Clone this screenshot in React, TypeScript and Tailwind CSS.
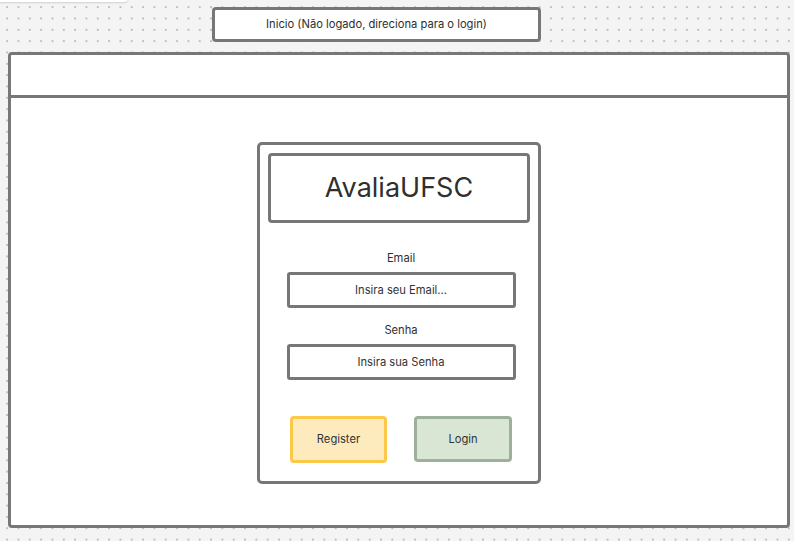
import React from 'react';

const Field = ({ label, placeholder, first }: { label: string; placeholder: string; first?: boolean }) => (
  <div className={`flex flex-col items-center pl-[4px] ${first ? 'mt-[27px]' : 'mt-[14px]'}`}>
    <span className="text-[11.2px] leading-4 text-[#2f2f2f]">{label}</span>
    <div className="mt-[6px] w-[229px] h-[36px] border-[3px] border-[#777] rounded-[3px] bg-white flex items-center justify-center text-[11.2px] text-[#333]">
      {placeholder}
    </div>
  </div>
);

const App: React.FC = () => {
  return (
    <div className="relative w-[794px] h-[541px] overflow-hidden bg-[#f4f4f4] font-['Inter','Liberation_Sans',sans-serif] text-[#333]">
      {/* dotted canvas */}
      <div className="absolute inset-0 bg-[radial-gradient(circle,#bdbdbd_0.8px,transparent_1.2px)] bg-[length:11.33px_11.33px] bg-[position:1.5px_1.5px]" />

      {/* clipped shape from the canvas above */}
      <div className="absolute left-[-12px] top-[-40px] w-[140px] h-[42px] bg-white rounded-[4px] shadow-[0_1px_2px_rgba(0,0,0,0.15)]" />

      <div className="relative pt-[7px] pl-[212px]">
        <div className="w-[329px] h-[35px] bg-white border-[3px] border-[#777] rounded-[4px] flex items-center justify-center text-[11.2px] text-[#2f2f2f]">
          Inicio (Não logado, direciona para o login)
        </div>
      </div>

      <div className="relative mt-[10px] ml-[8px] w-[782px] h-[476px] bg-[#ffffff] border-[3px] border-[#777] rounded-[4px] flex flex-col">
        <div className="h-[43px] shrink-0 border-b-[3px] border-[#777]" />
        <div className="flex-1 flex justify-center pt-[44px]">
          <div className="w-[284px] h-[342px] border-[3px] border-[#777] rounded-[5px] bg-white p-[8px] flex flex-col items-center">
            <div className="w-[262px] h-[70px] shrink-0 border-[3px] border-[#777] rounded-[4px] flex items-center justify-center text-[27px] text-[#2f2f2f]">
              AvaliaUFSC
            </div>
            <Field label="Email" placeholder="Insira seu Email..." first />
            <Field label="Senha" placeholder="Insira sua Senha" />
            <div className="mt-[36px] flex gap-[27px] pl-[4px]">
              <button className="w-[97px] h-[47px] bg-[#fdebbd] border-[3px] border-[#fcc849] rounded-[4px] text-[11.2px] text-[#333]">
                Register
              </button>
              <button className="w-[98px] h-[46px] bg-[#d8e6d3] border-[3px] border-[#9db09a] rounded-[4px] text-[11.2px] text-[#333]">
                Login
              </button>
            </div>
          </div>
        </div>
      </div>
    </div>
  );
};

export default App;
